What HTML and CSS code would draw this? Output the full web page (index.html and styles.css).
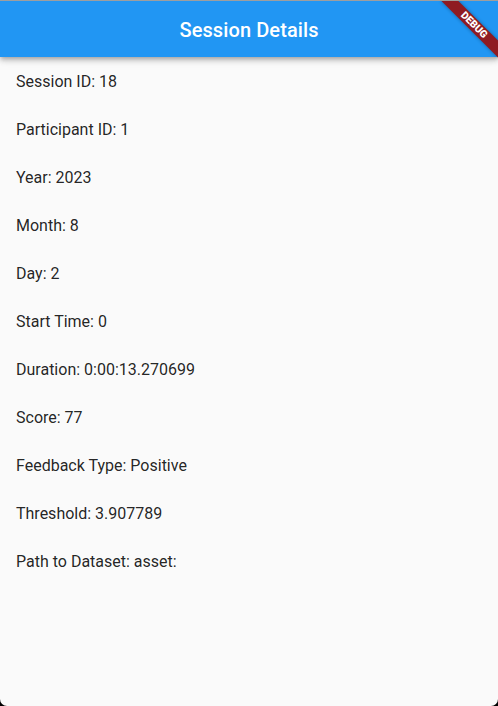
FILE: index.html
```html
<!DOCTYPE html>
<html>
<head>
<meta charset="utf-8">
<link rel="stylesheet" href="styles.css">
</head>
<body>
<div class="screen">
  <header class="appbar"><h1 class="title">Session Details</h1></header>
  <main class="content">
    <div class="row">Session ID: 18</div>
    <div class="row">Participant ID: 1</div>
    <div class="row">Year: 2023</div>
    <div class="row">Month: 8</div>
    <div class="row">Day: 2</div>
    <div class="row">Start Time: 0</div>
    <div class="row">Duration: 0:00:13.270699</div>
    <div class="row">Score: 77</div>
    <div class="row">Feedback Type: Positive</div>
    <div class="row">Threshold: 3.907789</div>
    <div class="row">Path to Dataset: asset:</div>
  </main>
  <div class="banner-anchor"><div class="banner">DEBUG</div></div>
</div>
</body>
</html>
```
FILE: styles.css
```css
html, body {
  margin: 0;
  padding: 0;
  background: #000;
  height: 706px;
  overflow: hidden;
}
.screen {
  position: relative;
  margin-top: 1px;
  width: 498px;
  height: 705px;
  background: #fafafa;
  border-radius: 0 0 7px 7px;
  overflow: hidden;
  display: flex;
  flex-direction: column;
  font-family: Roboto, "Liberation Sans", sans-serif;
}
body::before {
  content: "";
  display: block;
  position: absolute;
  top: 0; left: 0;
  width: 498px;
  height: 1px;
  background: #9e9e9e;
}
.appbar {
  height: 56px;
  flex: none;
  background: #2196f3;
  display: flex;
  align-items: center;
  justify-content: center;
  box-shadow: 0 2px 4px -1px rgba(0,0,0,0.2), 0 4px 5px 0 rgba(0,0,0,0.14), 0 1px 10px 0 rgba(0,0,0,0.12);
  position: relative;
  z-index: 1;
}
.title {
  margin: 0;
  padding-top: 2px;
  color: #fff;
  font-size: 20px;
  font-weight: 500;
  letter-spacing: 0.1px;
}
.content {
  display: flex;
  flex-direction: column;
}
.row {
  height: 48px;
  display: flex;
  align-items: center;
  padding-left: 16px;
  font-size: 16px;
  color: rgba(0,0,0,0.87);
}
.banner-anchor {
  position: absolute;
  left: 498px;
  top: 0;
  width: 0;
  height: 0;
  transform: rotate(45deg);
  z-index: 5;
}
.banner {
  position: absolute;
  left: -40px;
  top: 28px;
  width: 80px;
  height: 12px;
  background: #8f1b22;
  box-shadow: 0 0 4px rgba(0,0,0,0.35);
  color: #fff;
  font-family: Roboto, "Liberation Sans", sans-serif;
  font-size: 10.2px;
  font-weight: 900;
  line-height: 12px;
  text-align: center;
}
```
